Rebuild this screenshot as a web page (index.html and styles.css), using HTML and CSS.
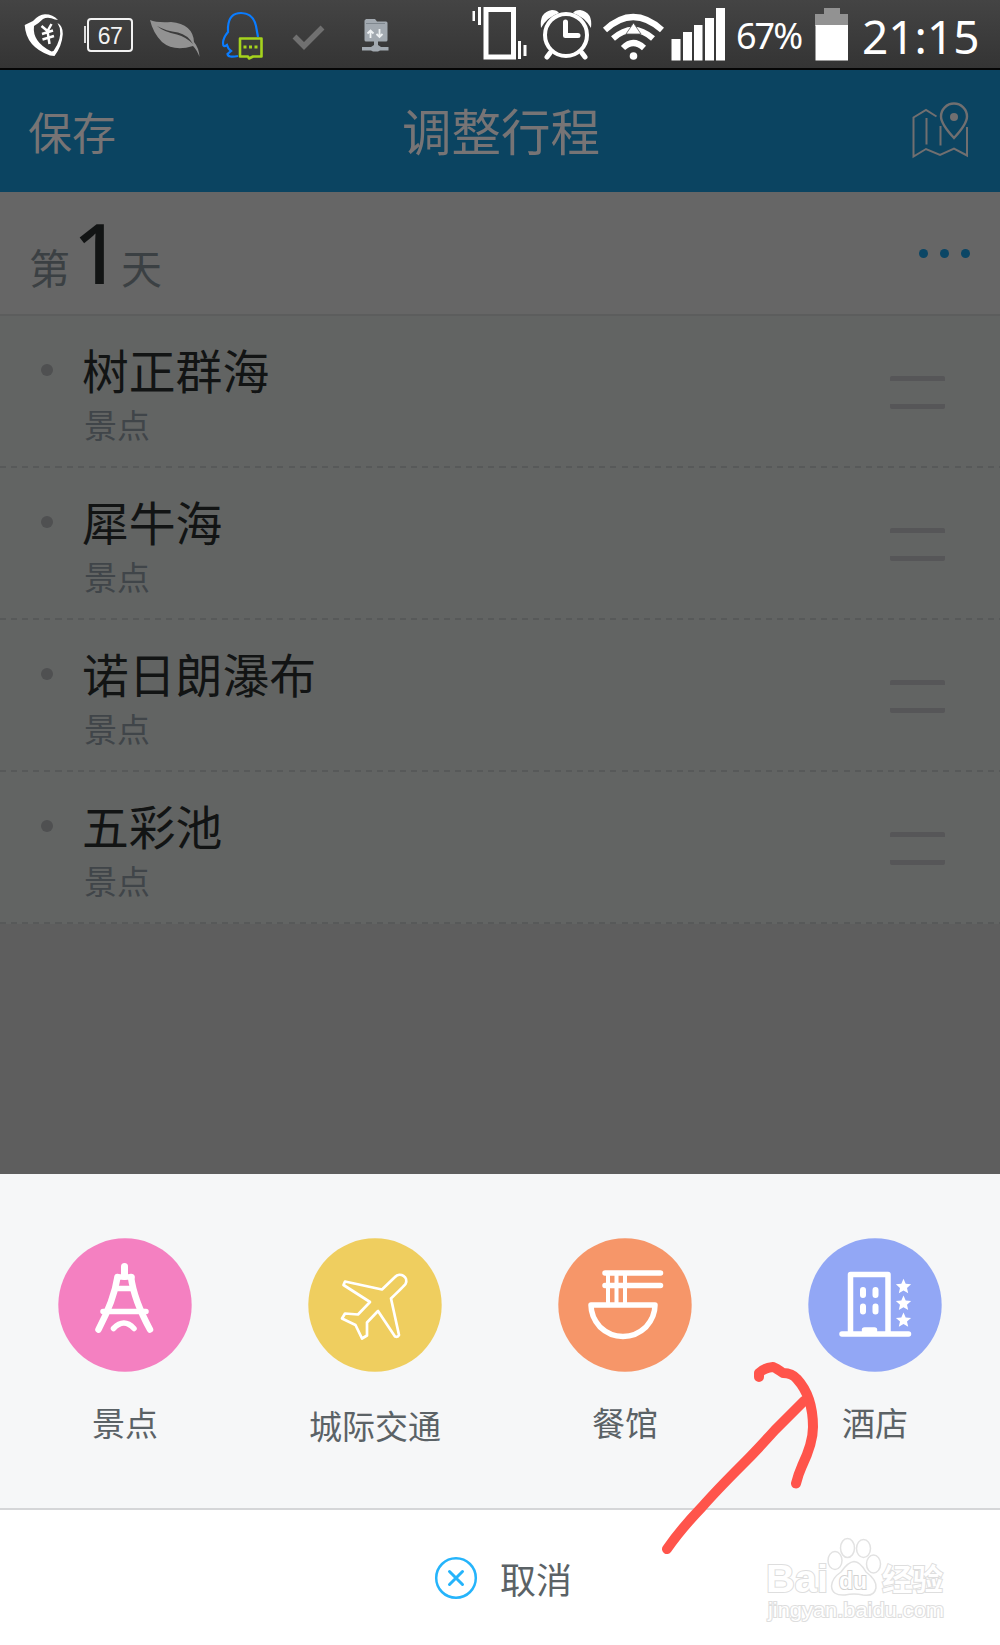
FILE: index.html
```html
<!DOCTYPE html>
<html lang="zh-CN">
<head>
<meta charset="utf-8">
<title>调整行程</title>
<link rel="stylesheet" href="styles.css">
</head>
<body>
<div class="screen">
  <div class="status">
    <div class="status-left">
      <svg width="41" height="46" viewBox="23 12 41 46" fill="none">
        <path fill="#fff" fill-rule="evenodd" d="M24.700 25L33 21Q39 14.500 45 14.300Q53 14.300 58 20L55 19.500Q48 16.500 43 19Q38 24 34 26Q32 42 51.500 51.500L53.500 51Q62 39 59.800 28L57.500 23Q63 26 62.800 34Q62 46 54.500 56L50 55.500Q26 47 24.700 25Z"/>
        <path stroke="#fff" stroke-width="2.500" d="M41.500 26l6 5 4-7M47.500 31l2 13M42 34l11-3.500M42.500 39.500l11.500-3.500"/>
      </svg>
      <div class="mini-battery"><span>67</span></div>
      <svg class="leaf" width="52" height="40" viewBox="149 19 52 40">
        <path fill="#929292" d="M150 20Q157 23 171 22Q193 24 194 42Q199 48 199.500 57Q197 50 193 46Q174 52 162 42Q153 33 150 20Z"/>
        <path d="M157 26Q166 31 178 32.500Q188 35 193 44Q186 37 177 34.500Q164 32 157 26Z" fill="#3c3c3c"/>
      </svg>
      <svg class="penguin" width="44" height="50" viewBox="220 11 44 50" fill="none">
        <path stroke="#0a7cff" stroke-width="2.200" d="M238 56Q228 58 227.500 54L231 51Q228 49 227 45Q223 48 223 43Q223 38 228 32V27Q229 13 241 13Q253 13 256 26L258 37"/>
        <path fill="#3b3b3b" stroke="#a5d31d" stroke-width="2.600" stroke-linejoin="round" d="M240 38.500h21.500v18H253l-4 2-1-2h-8z"/>
        <path fill="#a5d31d" d="M243.500 45.500h3v3h-3zM249 45.500h3v3h-3zM254.500 45.500h3v3h-3z"/>
      </svg>
      <svg class="check" width="34" height="28" viewBox="291 24 34 28"><path fill="none" stroke="#707070" stroke-width="5.500" d="M294.500 36.500l9.500 9.500 18.500-18.500"/></svg>
      <svg class="server" width="30" height="34" viewBox="361 18 30 34">
        <path fill="#a2a9b0" d="M366 19h9l2 2.500h9q1.500 0 1.500 1.500v17q0 1.500-1.500 1.500h-8v3.500l3 2h7.500v3.500H380l-2 1h-5l-2-1h-9v-3.500h9l3-2v-3.500h-8q-1.500 0-1.500-1.500V20.500z"/>
        <path fill="none" stroke="#7f878e" stroke-width="1" d="M366 23.500h19"/>
        <path fill="none" stroke="#eef1f3" stroke-width="1.800" d="M370.500 38v-7.500m-3 3 3-3 3 3M379.500 29v8m-3-3 3 3 3-3"/>
      </svg>
    </div>
    <div class="status-right">
      <svg width="255" height="56" viewBox="472 6 255 56" fill="none">
        <path stroke="#fff" stroke-width="5" d="M486 9.500h27.500v47.500H486z"/>
        <path fill="#fff" d="M472.500 11h2.500v10h-2.500zM478 7h3v18h-3zM518 41h3v18h-3zM523.500 45h3v11h-3z"/>
        <circle cx="566" cy="35" r="21" stroke="#fff" stroke-width="4"/>
        <path stroke="#fff" stroke-width="5" stroke-linecap="round" stroke-linejoin="round" d="M565.500 22v13.500H578M550 53l-3 4M582 53l3 4"/>
        <path fill="#fff" d="M541 28Q539 12 552 10Q557 10 559 13Q547 17 541 28ZM591 28Q593 12 580 10Q575 10 573 13Q585 17 591 28Z"/>
        <g stroke="#fff" stroke-width="6">
          <path d="M605 30Q633 4 662 30"/><path d="M613 38.500Q633 21 653 38.500"/><path d="M623 48Q633 38 644 48"/>
        </g>
        <path fill="#fff" stroke="#555" stroke-width=".8" d="M626 34l7.500-11 7.500 11z"/>
        <circle cx="633.500" cy="56" r="3.800" fill="#fff"/>
        <path fill="#fff" d="M671.500 39h9v21.500h-9zM683 32h9v28.500h-9zM694 25h8.500v35.500H694zM705 18h9v42.500h-9zM716 8h9v52.500h-9z"/>
      </svg>
      <span class="percent">67%</span>
      <svg class="battery" width="34" height="54" viewBox="815 7 34 54"><path fill="#929292" d="M824 8h16v6h8v12h-33V14h9z"/><path fill="#fff" d="M815.500 25h32.500v35.500h-32.500z"/></svg>
      <span class="clock">21:15</span>
    </div>
  </div>

  <header class="header">
    <span class="save">保存</span>
    <h1 class="title">调整行程</h1>
    <svg width="58" height="58" viewBox="911 101 58 58" fill="none" stroke="#716f70" stroke-width="2">
      <path d="M936.500 116.500 926 110 913.500 117.500V156.500L926 149 940 155 954 148.500 967 155.500V127M926.500 118v26.500M940.500 126v19.500"/>
      <path stroke-width="2.400" d="M954 138Q941 124 941 116.500A13 13 0 0 1 967 116.500Q967 124 954 138Z"/>
      <circle cx="954" cy="117" r="4" fill="#716f70" stroke="none"/>
    </svg>
  </header>

  <section class="day">
    <div class="day-name"><span>第</span><b>1</b><span>天</span></div>
    <div class="more"><i></i><i></i><i></i></div>
  </section>

  <ul class="list">
    <li class="row"><i class="dot"></i><div class="place"><div class="name">树正群海</div><div class="kind">景点</div></div><div class="handle"></div></li>
    <li class="row"><i class="dot"></i><div class="place"><div class="name">犀牛海</div><div class="kind">景点</div></div><div class="handle"></div></li>
    <li class="row"><i class="dot"></i><div class="place"><div class="name">诺日朗瀑布</div><div class="kind">景点</div></div><div class="handle"></div></li>
    <li class="row"><i class="dot"></i><div class="place"><div class="name">五彩池</div><div class="kind">景点</div></div><div class="handle"></div></li>
  </ul>

  <section class="sheet">
    <div class="option">
      <svg width="134" height="134" viewBox="58 1238 134 134" fill="none" stroke="#fff" stroke-linecap="round">
        <circle cx="125" cy="1305" r="66.700" fill="#f480c1" stroke="none"/>
        <path stroke-width="7" d="M124.500 1266.500v10"/>
        <path stroke-width="5.500" stroke-linejoin="miter" d="M117.500 1277h14.500M118 1288.500h13M103 1311.500h43"/>
        <path stroke-width="6.500" d="M117.500 1277Q114 1300 98.500 1329.500M131 1277Q134 1300 150 1329.500"/>
        <path stroke-width="5.500" d="M113.500 1328.500Q124 1317.500 134 1328.500"/>
      </svg>
      <span class="label">景点</span>
    </div>
    <div class="option">
      <svg width="134" height="134" viewBox="308 1238 134 134">
        <circle cx="375" cy="1305" r="66.700" fill="#efce5f"/>
        <path fill="none" stroke="#fff" stroke-width="2.700" stroke-linejoin="round" d="M345 1281.500 382 1289.500 395 1277C400 1271.500 409 1277 405.500 1284Q404 1286 391 1298.500L399 1335Q398 1337.500 395 1336.500L378 1311 367 1322.500V1335.500L362 1338.500 355.500 1325 342 1318.500 345 1313.500 358 1314.500 370 1302 343.500 1285Z"/>
      </svg>
      <span class="label label-low">城际交通</span>
    </div>
    <div class="option">
      <svg width="134" height="134" viewBox="558 1238 134 134" fill="none" stroke="#fff" stroke-linecap="round" stroke-linejoin="round">
        <circle cx="625" cy="1305" r="66.700" fill="#f69669" stroke="none"/>
        <path stroke-width="5.500" d="M605 1273h55.500M605 1285.500h55.500M591 1305h64Q655 1317 646 1327Q636 1336.500 623 1336.500Q610 1336.500 600 1327Q591 1317 591 1305Z"/>
        <path stroke-width="4" d="M608 1273v31M616.500 1273v31M625 1273v31"/>
      </svg>
      <span class="label">餐馆</span>
    </div>
    <div class="option">
      <svg width="134" height="134" viewBox="808.500 1238 134 134" fill="none" stroke="#fff" stroke-linecap="round" stroke-linejoin="round">
        <circle cx="875.500" cy="1305" r="66.700" fill="#92a7f5" stroke="none"/>
        <path stroke-width="5.500" d="M842.500 1334h66.500M851 1334V1274.500h37.500V1334M865 1330h10"/>
        <path stroke-width="6" d="M863.500 1290v5M876 1290v5M863.500 1306.500v5M876 1306.500v5"/>
        <g fill="#fff" stroke="none">
          <path id="star" d="M904 1278.800l2.200 5 5.400.5-4.100 3.600 1.200 5.300-4.700-2.800-4.700 2.800 1.200-5.300-4.100-3.600 5.400-.5z"/>
          <use href="#star" y="16.800"/><use href="#star" y="33.600"/>
        </g>
      </svg>
      <span class="label">酒店</span>
    </div>
  </section>

  <footer class="cancel">
    <svg width="44" height="44" viewBox="0 0 44 44" fill="none" stroke="#25b4fb"><circle cx="22" cy="22" r="19.800" stroke-width="2.500"/><path stroke-width="3" stroke-linecap="round" d="M15.500 15.500l13 13M28.500 15.500l-13 13"/></svg>
    <span>取消</span>
  </footer>

  <svg class="watermark" width="190" height="110" viewBox="760 1530 190 110">
    <g fill="#fff" stroke="#e2e2e2" stroke-width="1.500">
      <ellipse cx="835" cy="1560.500" rx="7" ry="9"/><ellipse cx="847.500" cy="1548" rx="7" ry="9.500"/><ellipse cx="863.500" cy="1548.500" rx="7" ry="9"/><ellipse cx="873.500" cy="1564" rx="7" ry="9"/>
      <path d="M854 1561.500Q860 1561.500 866 1572Q877 1580 876 1588Q874 1597 863 1595Q854 1593 845 1595Q832 1596 831.500 1586Q832 1578 841 1572Q848 1562 854 1561.500Z"/>
    </g>
    <g class="wm-text">
      <text x="766" y="1592" font-size="38" textLength="62" lengthAdjust="spacingAndGlyphs">Bai</text>
      <text class="wm-du" x="839" y="1589" font-size="24" textLength="28" lengthAdjust="spacingAndGlyphs">du</text>
      <text class="wm-cjk" x="882" y="1590" font-size="30" textLength="61" lengthAdjust="spacingAndGlyphs">经验</text>
      <text class="wm-url" x="768" y="1617" font-size="20" textLength="176" lengthAdjust="spacingAndGlyphs">jingyan.baidu.com</text>
    </g>
  </svg>
  <svg class="arrow" width="165" height="200" viewBox="660 1360 165 200" fill="none" stroke="#ff544b" stroke-width="10" stroke-linecap="round" stroke-linejoin="round">
    <path d="M759 1377V1373Q764 1368 773 1367Q776 1368 783 1373Q792 1373 797 1379C808 1391 813 1408 813 1427Q813 1443 802 1466Q798 1475 796 1483.500"/>
    <path d="M804 1401 775 1430Q757 1450 742 1465Q716 1491 702 1507 680 1530 667 1549"/>
  </svg>
</div>
</body>
</html>
```

FILE: styles.css
```css
* { box-sizing: border-box; }
body {
  margin: 0;
  font-family: "Noto Sans CJK SC", "Noto Sans", sans-serif;
}
svg { display: block; flex: none; }
i { display: block; border-radius: 50%; }

.screen {
  position: relative;
  display: flex;
  flex-direction: column;
  width: 1000px;
  height: 1645px;
  overflow: hidden;
  background: #5e5e5e;
}

/* Status bar */
.status {
  display: flex;
  justify-content: space-between;
  height: 70px;
  padding: 0 18px 0 23px;
  background: linear-gradient(#444, #343434);
  border-bottom: 2px solid #050505;
  color: #fff;
  font-family: "Noto Sans", sans-serif;
}
.status-left, .status-right { display: flex; align-items: flex-start; }
.status-left > svg:first-child { margin-top: 12px; }
.mini-battery {
  position: relative;
  width: 46px;
  height: 34px;
  margin: 18px 0 0 23px;
  border: 2px solid #f2f2f2;
  border-radius: 4px;
  font: 23px/33px "Liberation Sans", sans-serif;
  letter-spacing: -0.5px;
  text-align: center;
  color: #f2f2f2;
}
.mini-battery::before {
  content: "";
  position: absolute;
  left: -5px;
  top: 6px;
  width: 2px;
  height: 17px;
  background: #ddd;
}
.leaf { margin: 19px 0 0 16px; }
.penguin { margin: 11px 0 0 19px; }
.check { margin: 24px 0 0 27px; }
.server { margin: 18px 0 0 36px; }
.status-right > svg:first-child { margin-top: 6px; }
.percent {
  width: 88px;
  padding-left: 9px;
  font-size: 36px;
  line-height: 72px;
  letter-spacing: -2px;
}
.battery { margin-top: 7px; }
.clock {
  width: 133px;
  padding-left: 13px;
  font-size: 46px;
  line-height: 72px;
  white-space: nowrap;
}

/* Title bar */
.header {
  display: grid;
  grid-template-columns: 1fr auto 1fr;
  align-items: center;
  height: 122px;
  padding: 0 31px 0 28px;
  background: #0b4461;
  color: #777475;
}
.header svg { justify-self: end; margin-top: -2px; }
.save { font-size: 44px; line-height: 60px; margin-top: 0; }
.title { margin: -2px 0 0 5px; font-size: 49.500px; line-height: 60px; font-weight: 400; }

/* Day heading */
.day {
  display: flex;
  align-items: center;
  justify-content: space-between;
  height: 124px;
  padding: 0 29px;
  background: #666;
  border-bottom: 2px solid #5c5d5d;
}
.day-name {
  display: flex;
  align-items: baseline;
  padding-top: 12px;
  font-size: 41px;
  line-height: 100px;
  color: #3b4043;
}
.day-name b {
  width: 51px;
  padding-left: 3px;
  font: 500 83px/100px "Noto Sans", sans-serif;
  color: #121414;
}
.more { display: flex; gap: 12px; margin-right: 1px; }
.more i { width: 9px; height: 9px; background: #0b4665; }

/* Places */
.list { margin: 0; padding: 0; list-style: none; }
.row {
  display: flex;
  align-items: flex-start;
  height: 152px;
  padding: 0 55px 0 41px;
  background:
    repeating-linear-gradient(90deg, #575959 0 6px, transparent 6px 11.1px) 0 100% / 100% 2px no-repeat,
    #626463;
}
.dot { width: 12px; height: 12px; margin-top: 48px; background: #4f5051; }
.place { flex: 1; padding: 20px 0 0 29px; }
.name { font-size: 46.800px; line-height: 65px; color: #121414; }
.kind { padding: 1px 0 0 2px; font-size: 33px; line-height: 44px; color: #404549; }
.handle {
  width: 55px;
  height: 33px;
  margin-top: 60px;
  border: solid #565658;
  border-width: 5px 0;
  border-radius: 2px;
}

/* Bottom sheet */
.sheet {
  display: grid;
  grid-template-columns: repeat(4, 250px);
  height: 336px;
  margin-top: auto;
  padding-top: 64px;
  background: #f6f7f8;
  border-bottom: 2px solid #d5d6d8;
}
.option { display: flex; flex-direction: column; align-items: center; }
.label { margin-top: 28px; font-size: 33px; line-height: 44px; color: #5b6266; }
.label-low { margin-top: 31px; }
.cancel {
  display: flex;
  align-items: center;
  gap: 22px;
  height: 135px;
  padding-left: 434px;
  background: #fff;
  color: #5b6266;
  font-size: 36px;
  line-height: 44px;
}

.watermark { position: absolute; left: 760px; top: 1530px; }
.wm-text {
  fill: #fff;
  stroke: #dedede;
  stroke-width: 2px;
  paint-order: stroke;
  font-family: "Liberation Sans", sans-serif;
  font-weight: 700;
}
.wm-cjk { font-family: "Noto Sans CJK SC", sans-serif; }
.wm-du { stroke: #d2d2d2; }
.wm-url { font-weight: 400; }
.arrow { position: absolute; left: 660px; top: 1360px; }
```
